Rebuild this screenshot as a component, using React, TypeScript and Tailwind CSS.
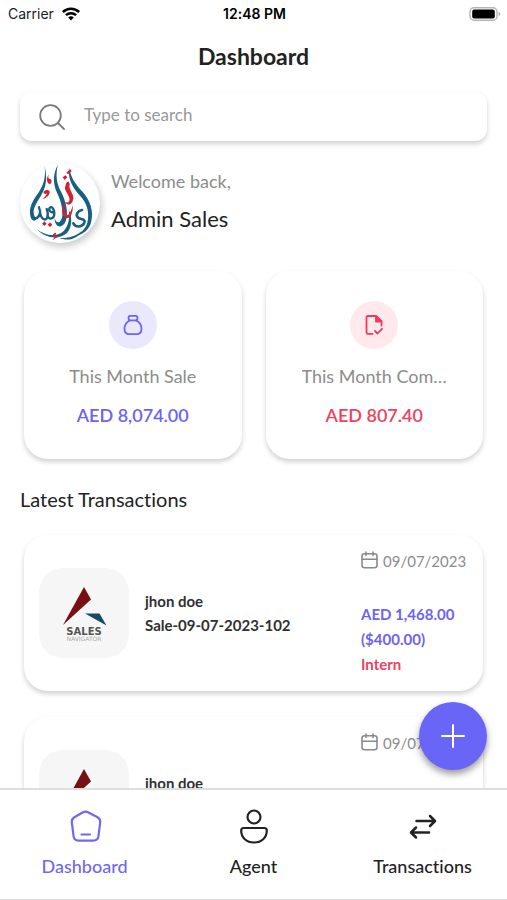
import { useState } from 'react';
import type { ReactNode } from 'react';

const CARD = 'bg-white shadow-[0_3px_5px_rgba(0,0,0,0.18)]';

const transactions = [
  {
    id: 1,
    name: 'jhon doe',
    code: 'Sale-09-07-2023-102',
    date: '09/07/2023',
    amount: 'AED 1,468.00',
    usd: '($400.00)',
    role: 'Intern',
  },
  {
    id: 2,
    name: 'jhon doe',
    code: 'Sale-09-07-2023-101',
    date: '09/07/2023',
    amount: 'AED 1,468.00',
    usd: '($400.00)',
    role: 'Intern',
  },
];

const StatusBar = () => (
  <div className="grid grid-cols-3 items-center h-7 pl-2 pr-1.5 font-['Inter',sans-serif] text-sm text-[#1c1c1c]">
    <div className="flex items-center gap-2">
      <span>Carrier</span>
      <svg width="18" height="14" viewBox="0 0 18 14" fill="none" stroke="#000" strokeWidth="2.5">
        <path d="M0.9 5A11.6 11.6 0 0 1 17.1 5" />
        <path d="M3.9 8.2A7.4 7.4 0 0 1 14.1 8.2" />
        <path d="M6.2 10.6A4 4 0 0 1 11.8 10.6L9 13.6Z" fill="#000" stroke="none" />
      </svg>
    </div>
    <span className="text-center font-semibold text-black">12:48 PM</span>
    <svg className="justify-self-end" width="32" height="14" viewBox="0 0 32 14">
      <rect x="1" y="0.7" width="27" height="12.6" rx="4" fill="#fff" stroke="#b5b5b5" strokeWidth="1.4" />
      <rect x="3.2" y="2.6" width="22.6" height="8.8" rx="2" fill="#000" />
      <path d="M29.6 5v4q1.6-0.6 1.6-2t-1.6-2Z" fill="#aaa" />
    </svg>
  </div>
);

const CompanyLogo = () => (
  <svg className="size-full" viewBox="0 9 240 240" role="img" aria-label="Company logo">
    {/* drop outlines */}
    <g fill="#17607f">
      <path d="M74 18C78 55 70 78 50 106C32 131 26 150 32 172C37 187 48 184 54 170C47 175 42 170 41 158C40 145 47 132 61 110C80 80 82 55 74 18Z" />
      <path d="M113 15C98 45 99 72 111 98C127 130 132 165 123 180C117 192 107 188 104 174C103 203 128 208 137 184C146 160 139 125 122 93C109 68 107 45 113 15Z" />
      <path d="M147 22C143 55 156 82 180 107C202 130 209 158 202 188C197 206 182 222 158 230C190 226 209 208 214 184C221 155 211 122 189 97C165 72 152 52 147 22Z" />
      <path d="M50 207C78 230 112 231 132 212C146 197 150 175 146 148C158 176 156 204 140 220C118 240 76 236 50 207Z" />
      <path d="M118 234C146 236 172 226 186 212C176 232 150 246 118 234Z" />
    </g>
    <g fill="none" stroke="#17607f" strokeLinecap="round" strokeLinejoin="round">
      <path d="M51 174C61 166 62 154 57 142M60 156C62 176 76 186 82 172C85 163 83 154 80 147M83 168C87 180 103 178 103 160C103 146 94 136 88 145C86 152 93 159 101 156" strokeWidth="7" />
      <path d="M186 150C174 152 165 164 174 173C182 179 197 175 193 188C188 202 168 204 160 190" strokeWidth="8" />
    </g>
    <g fill="#cf2330">
      <path d="M86 44C78 55 79 66 89 73C99 66 95 56 88 56C85 54 84 50 86 44Z" />
      <path d="M70 96C77 88 91 88 89 98C87 108 78 114 68 117C76 109 80 105 81 100C77 103 72 102 70 96Z" />
      <path d="M139 38L151 28L155 34L144 43ZM128 52L136 46L142 52L134 60Z" />
      <path d="M139 68C147 60 151 70 148 80C152 98 164 104 159 121C154 136 142 138 136 126C144 130 151 125 148 114C145 102 134 94 135 82Z" />
      <path d="M137 126C122 143 123 164 138 174C151 178 160 159 158 135C154 153 148 164 142 165C132 158 133 142 137 126Z" />
      <path d="M90 187L97 194L90 201L83 194ZM73 184L80 191L73 198L66 191Z" />
      <path d="M108 218C97 220 96 228 104 231L97 241C103 236 112 232 118 228C107 230 102 226 109 223Z" />
    </g>
  </svg>
);

const SalesLogo = () => (
  <svg className="size-full" viewBox="0 0 90 90" role="img" aria-label="Sales Navigator">
    <path d="M45 19L52 31.5L24 57Z" fill="#761014" />
    <path d="M46 45.5H60.5L67.5 57.5Z" fill="#174a66" />
    <text x="45" y="67" textAnchor="middle" className="font-['DejaVu_Sans',sans-serif] font-bold text-[10px]" fill="#555">
      SALES
    </text>
    <text x="45" y="73" textAnchor="middle" className="font-['DejaVu_Sans',sans-serif] text-[6px]" fill="#aaa">
      NAVIGATOR
    </text>
  </svg>
);

const CalendarIcon = () => (
  <svg className="shrink-0 mb-1" width="17" height="18" viewBox="0 0 17 18" fill="none" stroke="#8a8a8a" strokeWidth="1.6" strokeLinecap="round">
    <rect x="1" y="2.8" width="15" height="14" rx="2.5" />
    <path d="M1 8.2H16M5 1V4.5M12 1V4.5" />
  </svg>
);

type StatCardProps = {
  icon: ReactNode;
  label: string;
  value: string;
  badge: string;
  color: string;
};

const StatCard = ({ icon, label, value, badge, color }: StatCardProps) => (
  <div className={`${CARD} flex-1 min-w-0 flex flex-col items-center rounded-3xl px-9 pt-[30px] pb-8`}>
    <div className={`size-12 rounded-full flex items-center justify-center ${badge}`}>{icon}</div>
    <p className="mt-[15px] max-w-full truncate text-lg leading-6 text-[#8c8c8c]">{label}</p>
    <p className={`mt-[15px] text-lg leading-6 font-semibold ${color}`}>{value}</p>
  </div>
);

const TransactionCard = ({ item }: { item: (typeof transactions)[number] }) => (
  <li className={`${CARD} shrink-0 flex items-center rounded-3xl py-3.5 px-[15px]`}>
    <div className="size-[90px] shrink-0 rounded-3xl bg-[#f6f6f6]">
      <SalesLogo />
    </div>
    <div className="ml-4 flex-1 min-w-0 text-[15px] leading-6 font-bold text-[#303030]">
      <p>{item.name}</p>
      <p>{item.code}</p>
    </div>
    <div className="w-[107px] shrink-0 text-[15px] leading-[25px] font-bold text-[#6c63f5]">
      <p className="mb-7 flex items-center gap-[5px] font-normal text-[#8c8c8c]">
        <CalendarIcon />
        {item.date}
      </p>
      <p>{item.amount}</p>
      <p>{item.usd}</p>
      <p className="text-[#f0415f]">{item.role}</p>
    </div>
  </li>
);

const tabs = [
  {
    key: 'dashboard',
    label: 'Dashboard',
    icon: (
      <>
        <path d="M15 3.2Q17.5 2 20 3.2L29.6 8.3Q32.6 10 32.2 13.4L30.4 27.4Q29.8 31.6 25.5 31.6H10.5Q6.2 31.6 5.6 27.4L3.8 13.4Q3.4 10 6.4 8.3Z" />
        <path d="M13.5 25.5H22" />
      </>
    ),
  },
  {
    key: 'agent',
    label: 'Agent',
    icon: (
      <>
        <circle cx="17" cy="8" r="6.5" />
        <path d="M6.7 19H27.3Q29.8 19 29.8 21.5C29.8 28.7 24.5 33.5 17 33.5S4.2 28.7 4.2 21.5Q4.2 19 6.7 19Z" />
      </>
    ),
  },
  {
    key: 'transactions',
    label: 'Transactions',
    icon: (
      <>
        <path strokeWidth="2.5" d="M10.5 12H28.5M24 7L29 12L24 17" />
        <path strokeWidth="2.5" d="M23 23.5H5.5M10 18.5L5 23.5L10 28.5" />
      </>
    ),
  },
];

const App = () => {
  const [active, setActive] = useState('dashboard');

  return (
    <div className="flex flex-col h-dvh overflow-hidden bg-white font-['Lato',sans-serif] text-[#222] [font-variant-ligatures:none]">
      <StatusBar />
      <h1 className="pt-3 pb-4 text-center text-[23px] leading-8 font-bold">Dashboard</h1>

      <div className="relative flex-1 min-h-0">
        <main className="h-full overflow-hidden px-5 pt-1">
          {/* search */}
          <label className={`${CARD} flex items-center gap-[18px] h-[49px] rounded-xl px-[18px]`}>
            <svg width="28" height="28" viewBox="0 0 28 28" fill="none" stroke="#7b7b7b" strokeWidth="1.8" strokeLinecap="round">
              <circle cx="12.5" cy="12.5" r="10.3" />
              <path d="M20 20L26 26" />
            </svg>
            <input
              type="text"
              aria-label="Type to search"
              placeholder="Type to search"
              className="flex-1 min-w-0 pb-1 bg-transparent text-[17px] outline-none placeholder:text-[#999]"
            />
          </label>

          {/* profile */}
          <section className="mt-[22px] flex items-center gap-[11px]">
            <div className="size-20 rounded-full bg-white shadow-[2px_4px_7px_rgba(0,0,0,0.2)]">
              <CompanyLogo />
            </div>
            <div className="pb-1">
              <p className="text-lg leading-6 text-[#8c8c8c]">Welcome back,</p>
              <p className="mt-3 text-[22px] leading-7">Admin Sales</p>
            </div>
          </section>

          {/* monthly totals */}
          <section className="mt-7 flex gap-6 px-1">
            <StatCard
              icon={
                <svg width="20" height="22" viewBox="0 0 20 22" fill="none" stroke="#6c63f5" strokeWidth="1.8" strokeLinejoin="round">
                  <rect x="5.6" y="1.8" width="8.8" height="4.6" rx="1.6" />
                  <path d="M7 6.4C3.6 8 1.5 11.4 1.5 15C1.5 18.6 3.3 20.2 6.5 20.2H13.5C16.7 20.2 18.5 18.6 18.5 15C18.5 11.4 16.4 8 13 6.4" />
                </svg>
              }
              label="This Month Sale"
              value="AED 8,074.00"
              badge="bg-[#e9e8fc]"
              color="text-[#6c63f5]"
            />
            <StatCard
              icon={
                <svg width="18" height="22" viewBox="0 0 18 22" fill="none" stroke="#ee3a5b" strokeWidth="1.8" strokeLinecap="round" strokeLinejoin="round">
                  <path d="M7.5 19.8H3Q1.5 19.8 1.5 18.3V3.5Q1.5 2 3 2H11L16.5 7.5V11.5" />
                  <path d="M11 2V7.5H16.5Z" fill="#ee3a5b" />
                  <path d="M10 17L12.5 19.5L17 14.8" />
                </svg>
              }
              label="This Month Commission"
              value="AED 807.40"
              badge="bg-[#ffe9ed]"
              color="text-[#f0415f]"
            />
          </section>

          <h2 className="mt-[26px] mb-[22px] text-xl leading-7">Latest Transactions</h2>
          <ul className="flex flex-col gap-[26px] px-1">
            {transactions.map((item) => (
              <TransactionCard key={item.id} item={item} />
            ))}
          </ul>
        </main>

        <button
          type="button"
          aria-label="Add sale"
          className="absolute right-5 bottom-[18px] size-[68px] rounded-full bg-[#6865f7] shadow-[0_4px_7px_rgba(0,0,0,0.4)] flex items-center justify-center"
        >
          <svg width="24" height="24" viewBox="0 0 24 24" stroke="#fff" strokeWidth="2" strokeLinecap="round">
            <path d="M12 1V23M1 12H23" />
          </svg>
        </button>
      </div>

      {/* bottom tabs */}
      <nav className="relative grid grid-cols-3 border-t-2 border-b border-[#dedede] bg-white pt-[19px] pb-[21px]">
        {tabs.map((tab) => (
          <button
            key={tab.key}
            type="button"
            onClick={() => setActive(tab.key)}
            className={`flex flex-col items-center gap-[9px] text-lg leading-6 font-medium ${active === tab.key ? 'text-[#7068f5]' : 'text-[#222]'}`}
          >
            <svg width="34" height="36" viewBox="0 0 34 36" fill="none" stroke="currentColor" strokeWidth="2.2" strokeLinecap="round" strokeLinejoin="round">
              {tab.icon}
            </svg>
            {tab.label}
          </button>
        ))}
      </nav>
    </div>
  );
};

export default App;
